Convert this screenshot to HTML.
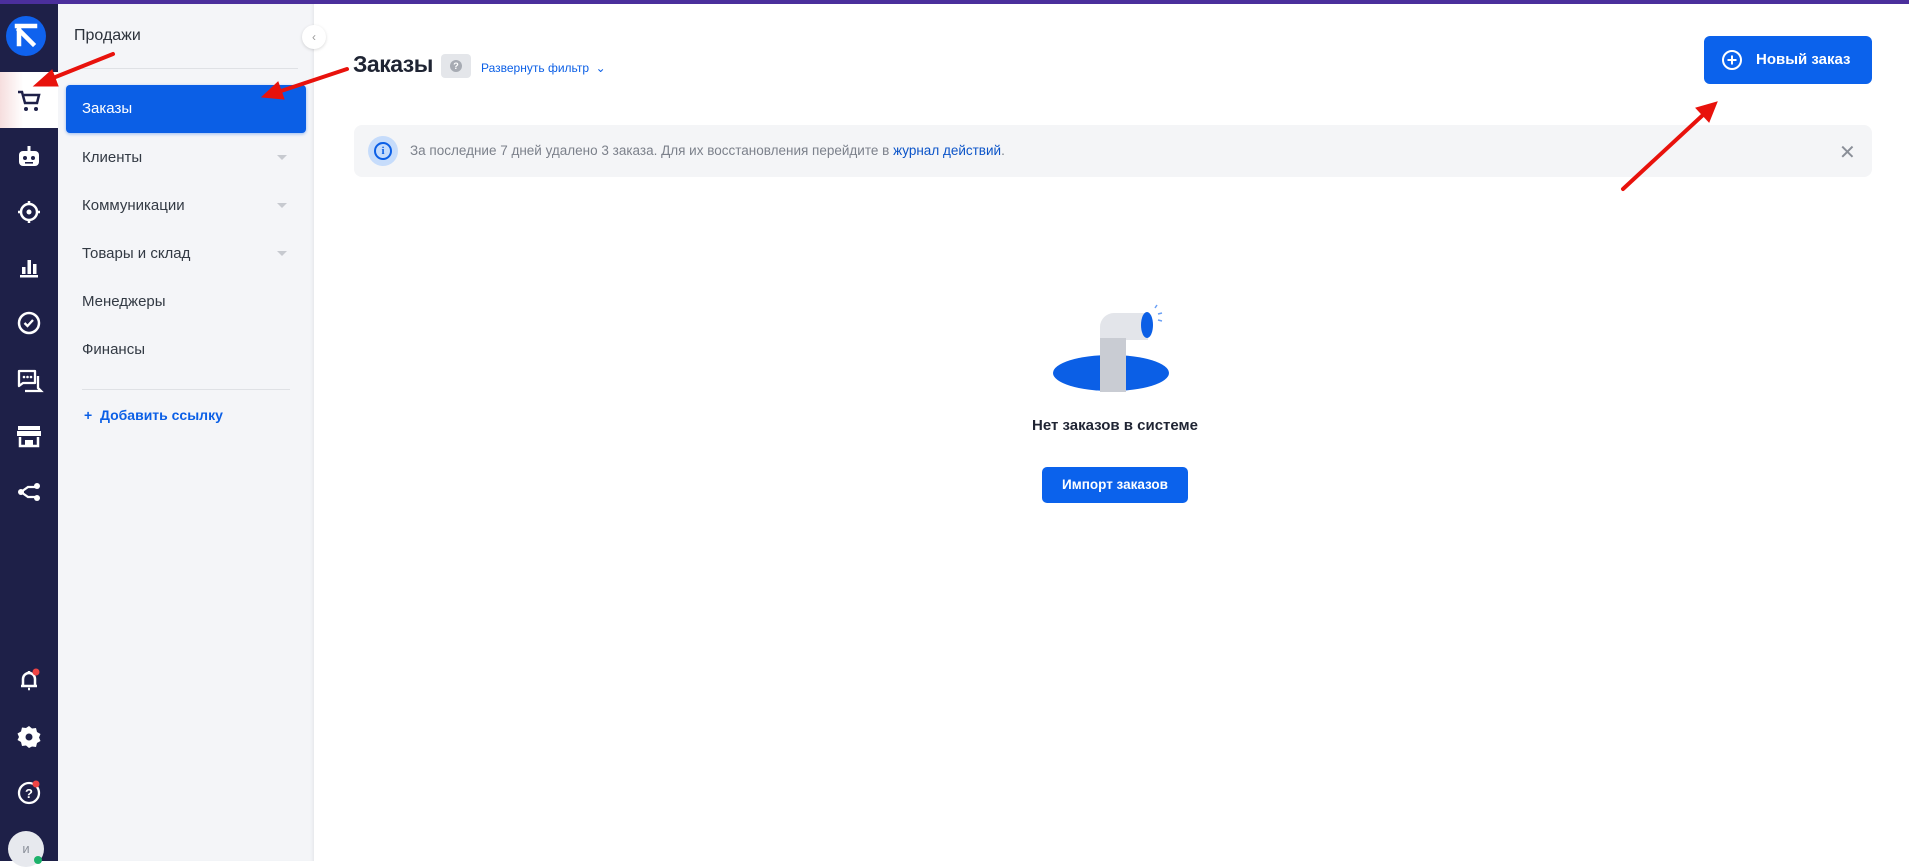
<!DOCTYPE html>
<html><head><meta charset="utf-8"><style>
*{margin:0;padding:0;box-sizing:border-box}
body{width:1909px;height:861px;overflow:hidden;background:#fff;font-family:"Liberation Sans","Noto Sans CJK SC",sans-serif;position:relative}
.abs{position:absolute}
.top{left:0;top:0;width:1909px;height:4px;background:#4b2f9c}
.rail{left:0;top:4px;width:58px;height:857px;background:#1e2048}
.panel{left:58px;top:4px;width:256px;height:857px;background:#f4f5f8;box-shadow:inset -3px 0 3px -2px #e2e4e8}
.item{position:absolute;left:82px;font-size:15px;color:#333a44}
.caret{position:absolute;left:277px;width:0;height:0;border-left:5px solid transparent;border-right:5px solid transparent;border-top:5px solid #c7cad0}
.ic{position:absolute;left:14px;width:30px;height:30px}
</style></head><body>
<div class="abs top"></div>
<div class="abs rail"></div>
<div class="abs" style="left:0;top:72px;width:58px;height:56px;background:linear-gradient(90deg,#f6dede,#fff 40%)"></div>
<svg class="abs" style="left:6px;top:16px" width="40" height="40" viewBox="0 0 40 40"><circle cx="20" cy="20" r="20" fill="#0f62ee"/><path d="M11 10h18M13 14v14M13 14l14 14" stroke="#fff" stroke-width="4.5" fill="none" stroke-linecap="square"/></svg>
<svg class="ic" style="top:85px" viewBox="0 0 30 30"><path d="M4 7h4l3 11h12l2-8H10" stroke="#1e2048" stroke-width="2.5" fill="none"/><circle cx="12" cy="24" r="2" fill="#1e2048"/><circle cx="22" cy="24" r="2" fill="#1e2048"/></svg>
<svg class="ic" style="top:142px" viewBox="0 0 30 30"><rect x="5" y="9" width="20" height="15" rx="4" fill="#fff"/><rect x="13.5" y="4" width="3" height="6" fill="#fff"/><circle cx="11" cy="16" r="2" fill="#1e2048"/><circle cx="19" cy="16" r="2" fill="#1e2048"/><rect x="11" y="20" width="8" height="1.6" fill="#1e2048"/></svg>
<svg class="ic" style="top:197px" viewBox="0 0 30 30"><circle cx="15" cy="15" r="8" stroke="#fff" stroke-width="2.5" fill="none"/><circle cx="15" cy="15" r="2.5" fill="#fff"/><path d="M15 4v4M15 22v4M4 15h4M22 15h4" stroke="#fff" stroke-width="2.5"/></svg>
<svg class="ic" style="top:252px" viewBox="0 0 30 30"><rect x="6" y="23" width="18" height="2.5" fill="#fff"/><rect x="8" y="15" width="3.5" height="7" fill="#fff"/><rect x="13.5" y="8" width="3.5" height="14" fill="#fff"/><rect x="19" y="12" width="3.5" height="10" fill="#fff"/></svg>
<svg class="ic" style="top:308px" viewBox="0 0 30 30"><circle cx="15" cy="15" r="10" stroke="#fff" stroke-width="2.5" fill="none"/><path d="M10.5 15l3 3 5.5-6" stroke="#fff" stroke-width="2.3" fill="none"/></svg>
<svg class="ic" style="top:365px" viewBox="0 0 30 30"><path d="M5 6h16v12H9l-4 3z" stroke="#fff" stroke-width="2.3" fill="none" stroke-linejoin="round"/><path d="M24 11v12l3 3H11" stroke="#fff" stroke-width="2.3" fill="none"/><circle cx="10" cy="12" r="1.3" fill="#fff"/><circle cx="13.5" cy="12" r="1.3" fill="#fff"/><circle cx="17" cy="12" r="1.3" fill="#fff"/></svg>
<svg class="ic" style="top:420px" viewBox="0 0 30 30"><rect x="4" y="6" width="22" height="4" fill="#fff"/><rect x="3" y="11" width="24" height="5" fill="#fff"/><path d="M6 17v9h18v-9" stroke="#fff" stroke-width="2.5" fill="none"/><rect x="11" y="20" width="8" height="6" fill="#fff"/></svg>
<svg class="ic" style="top:477px" viewBox="0 0 30 30"><circle cx="7" cy="15" r="3" fill="#fff"/><circle cx="23" cy="9" r="3" fill="#fff"/><circle cx="23" cy="21" r="3" fill="#fff"/><path d="M7 15l7-5h9M7 15l7 5h9" stroke="#fff" stroke-width="2.3" fill="none"/></svg>
<svg class="ic" style="top:665px" viewBox="0 0 30 30"><path d="M9 21v-7a6 6 0 0 1 12 0v7zM7 21h16M15 6v2M14 24h2" stroke="#fff" stroke-width="2.5" fill="none"/><circle cx="22" cy="7" r="3.5" fill="#ef4444"/></svg>
<svg class="ic" style="top:722px" viewBox="0 0 30 30"><path d="M15 4l3 2.5 4-.5 1 4 3.5 2-1.5 3.5 1.5 3.5-3.5 2-1 4-4-.5L15 26l-3-2.5-4 .5-1-4-3.5-2L5 15l-1.5-3.5 3.5-2 1-4 4 .5z" fill="#fff"/><circle cx="15" cy="15" r="3.5" fill="#1e2048"/></svg>
<svg class="ic" style="top:778px" viewBox="0 0 30 30"><circle cx="15" cy="15" r="10" stroke="#fff" stroke-width="2.3" fill="none"/><text x="15" y="20" font-size="13" font-weight="bold" fill="#fff" text-anchor="middle" font-family="Liberation Sans">?</text><circle cx="22" cy="6" r="3.5" fill="#ef4444"/></svg>
<div class="abs" style="left:8px;top:831px;width:36px;height:36px;border-radius:50%;background:#e7e9ee;color:#8b909a;font-size:13px;text-align:center;line-height:36px">и</div>
<div class="abs" style="left:34px;top:856px;width:8px;height:8px;border-radius:50%;background:#1db26b"></div>

<div class="abs panel"></div>
<div class="abs" style="left:74px;top:27px;font-size:16px;color:#2c323b">Продажи</div>
<div class="abs" style="left:82px;top:68px;width:216px;height:1px;background:#dfe1e5"></div>
<div class="abs" style="left:66px;top:85px;width:240px;height:48px;background:#0b5fe6;border-radius:4px;box-shadow:0 1px 3px rgba(11,95,230,.4)"></div>
<div class="item" style="top:100px;color:#fff">Заказы</div>
<div class="item" style="top:149px">Клиенты</div><div class="caret" style="top:155px"></div>
<div class="item" style="top:197px">Коммуникации</div><div class="caret" style="top:203px"></div>
<div class="item" style="top:245px">Товары и склад</div><div class="caret" style="top:251px"></div>
<div class="item" style="top:293px">Менеджеры</div>
<div class="item" style="top:341px">Финансы</div>
<div class="abs" style="left:82px;top:389px;width:208px;height:1px;background:#dfe1e5"></div>
<div class="abs" style="left:84px;top:407px;font-size:14px;font-weight:bold;color:#0b5fe6">+&nbsp;&nbsp;Добавить ссылку</div>
<div class="abs" style="left:302px;top:25px;width:24px;height:24px;border-radius:50%;background:#fff;box-shadow:0 1px 3px rgba(0,0,0,.15);color:#999;font-size:12px;text-align:center;line-height:24px">‹</div>

<div class="abs" style="left:353px;top:51px;font-size:23px;color:#1f2433;font-weight:bold;letter-spacing:-0.5px">Заказы</div>
<div class="abs" style="left:441px;top:54px;width:30px;height:24px;background:#e4e6ea;border-radius:4px"><div style="margin:6px auto;width:12px;height:12px;border-radius:50%;background:#a7abb3;color:#fff;font-size:9px;font-weight:bold;text-align:center;line-height:12px">?</div></div>
<div class="abs" style="left:481px;top:61px;font-size:12px;color:#0b5fe6">Развернуть фильтр&nbsp;&nbsp;⌄</div>

<div class="abs" style="left:1704px;top:36px;width:168px;height:48px;background:#0b62ec;border-radius:6px;color:#fff;font-size:15px;font-weight:bold;line-height:48px;padding-left:52px">Новый заказ</div>
<svg class="abs" style="left:1721px;top:49px" width="22" height="22" viewBox="0 0 22 22"><circle cx="11" cy="11" r="9" stroke="#fff" stroke-width="2" fill="none"/><path d="M11 6.5v9M6.5 11h9" stroke="#fff" stroke-width="2"/></svg>

<div class="abs" style="left:354px;top:125px;width:1518px;height:52px;background:#f4f5f7;border-radius:8px"></div>
<div class="abs" style="left:368px;top:136px;width:30px;height:30px;border-radius:50%;background:#c6dcfb"><div style="margin:6px;width:18px;height:18px;border:2px solid #0b5fe6;border-radius:50%;color:#0b5fe6;font-size:11px;font-weight:bold;text-align:center;line-height:14px;font-family:'Liberation Serif',serif">i</div></div>
<div class="abs" style="left:410px;top:143px;font-size:13.5px;color:#7c818b">За последние 7 дней удалено 3 заказа. Для их восстановления перейдите в <span style="color:#0b54c8">журнал действий</span>.</div>
<div class="abs" style="left:1839px;top:140px;font-size:20px;color:#8a8f98">✕</div>

<svg class="abs" style="left:1040px;top:295px" width="140" height="105" viewBox="1040 295 140 105">
<ellipse cx="1111" cy="373" rx="58" ry="18" fill="#0b5fe6"/>
<path d="M1100 392V327a14 14 0 0 1 14-14h34v27h-22v52z" fill="#e3e5ea"/>
<rect x="1100" y="338" width="26" height="54" fill="#c9ccd3"/>
<ellipse cx="1147" cy="325" rx="6" ry="13" fill="#0b5fe6"/>
<path d="M1155 308l2-3M1158 314l4-1M1158 320l4 1" stroke="#6aa0f5" stroke-width="1.5"/>
</svg>
<div class="abs" style="left:1015px;top:417px;width:200px;text-align:center;font-size:15px;font-weight:bold;color:#1f2433">Нет заказов в системе</div>
<div class="abs" style="left:1042px;top:467px;width:146px;height:36px;background:#0b62ec;border-radius:5px;color:#fff;font-size:13.5px;font-weight:bold;text-align:center;line-height:36px">Импорт заказов</div>

<svg class="abs" style="left:0;top:0" width="1909" height="861">
<g stroke="#e8120c" stroke-width="4" stroke-linecap="round" fill="#e8120c">
<line x1="113" y1="54" x2="48" y2="80"/><polygon points="34,86 52,70 58,86" stroke-width="1"/>
<line x1="347" y1="69" x2="278" y2="92"/><polygon points="262,97 278,82 284,99" stroke-width="1"/>
<line x1="1623" y1="189" x2="1704" y2="114"/><polygon points="1717,102 1696,108 1709,122" stroke-width="1"/>
</g></svg>
</body></html>
